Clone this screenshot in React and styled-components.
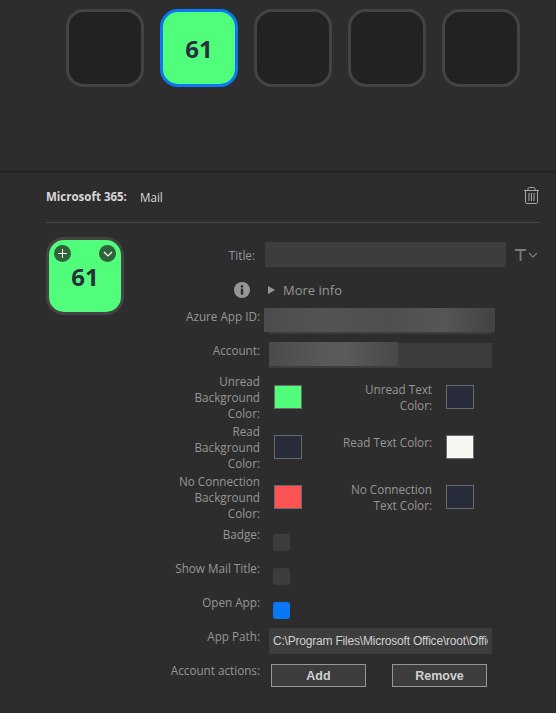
import React from "react";
import styled, { createGlobalStyle } from "styled-components";

const Global = createGlobalStyle`
  html, body { margin: 0; padding: 0; background: #2d2d2d; }
  body { font-family: "Open Sans", "Noto Sans", sans-serif; font-size: 11.7px; color: #969696; }
  #root { width: 556px; height: 713px; overflow: hidden; }
`;

const Page = styled.div`
  width: 556px;
  height: 713px;
  display: flex;
  flex-direction: column;
  background: #2d2d2d;
`;
const Deck = styled.div`
  height: 173px;
  flex: none;
  box-sizing: border-box;
  padding: 9px 0 0 66px;
  display: flex;
  gap: 16px;
  align-items: flex-start;
  border-bottom: 3px solid #252525;
`;
const Key = styled.div`
  width: 78px;
  height: 78px;
  box-sizing: border-box;
  border-radius: 18px;
  border: 3px solid ${p => (p.$active ? "#0a78f5" : "#444444")};
  background: ${p => (p.$active ? "#50fe7c" : "#222222")};
  display: flex;
  align-items: center;
  justify-content: center;
  font-family: "Noto Sans", sans-serif;
  font-weight: 700;
  font-size: 24px;
  color: #292e3c;
`;
const Inspector = styled.div`
  flex: 1;
  padding: 0 16px 0 46px;
  display: flex;
  flex-direction: column;
`;
const Header = styled.div`
  height: 50px;
  box-sizing: border-box;
  padding-bottom: 2px;
  display: flex;
  align-items: center;
  border-bottom: 1px solid #474747;
  color: #d8d8d8;
  font-size: 11.7px;
`;
const Plugin = styled.span`
  font-weight: 700;
  font-size: 11.5px;
  margin-right: 13px;
`;
const Action = styled.span`
  flex: 1;
`;
const Trash = styled.svg`
  width: 15px;
  height: 17px;
  margin: 0 1px 2px 0;
  color: #a8a8a8;
`;
const Body = styled.div`
  display: flex;
  padding-top: 14px;
`;
const PreviewKey = styled.div`
  position: relative;
  width: 78px;
  height: 78px;
  box-sizing: border-box;
  border-radius: 18px;
  border: 3px solid #444444;
  background: #50fe7c;
  display: flex;
  align-items: center;
  justify-content: center;
  font-family: "Noto Sans", sans-serif;
  font-weight: 700;
  font-size: 24px;
  color: #292e3c;
`;
const Badge = styled.span`
  position: absolute;
  top: 5px;
  ${p => (p.$right ? "right: 5px;" : "left: 5px;")}
  width: 17px;
  height: 17px;
  border-radius: 50%;
  background: #2f6339;
  display: flex;
  align-items: center;
  justify-content: center;
  color: #fff;
`;
const Form = styled.div`
  margin-left: 46px;
  width: 370px;
  display: flex;
  flex-direction: column;
`;
const TitleRow = styled.div`
  display: flex;
  align-items: center;
  height: 25px;
  margin-top: 5px;
`;
const TitleLabel = styled.label`
  width: 85px;
  text-align: right;
  flex: none;
`;
const TitleInput = styled.div`
  margin-left: 10px;
  width: 241px;
  height: 25px;
  background: #3d3d3d;
  flex: none;
`;
const TitleTool = styled.div`
  margin-left: 9px;
  display: flex;
  align-items: center;
  gap: 2px;
  color: #7d7d7d;
`;
const InfoRow = styled.div`
  display: flex;
  align-items: center;
  height: 24px;
  margin-top: 11px;
  color: #969696;
`;
const InfoIcon = styled.svg`
  margin-left: 64px;
  width: 16px;
  height: 16px;
  flex: none;
`;
const Disclosure = styled.span`
  margin-left: 18px;
  width: 0;
  height: 0;
  border-left: 7px solid #969696;
  border-top: 4px solid transparent;
  border-bottom: 4px solid transparent;
`;
const More = styled.span`
  margin-left: 8px;
  font-size: 13px;
`;
const Row = styled.div`
  display: grid;
  grid-template-columns: 90px 1fr;
  column-gap: ${p => p.$gap ?? 9}px;
  align-items: start;
  margin-top: ${p => p.$top ?? 0}px;
  height: ${p => (p.$h ? `${p.$h}px` : "auto")};
`;
const Label = styled.label`
  margin: -1px 0 0 -10px;
  text-align: right;
  line-height: 16px;
  white-space: nowrap;
`;
const Field = styled.div`
  position: relative;
  width: 223px;
  height: 25px;
  background: #3d3d3d;
`;
const BlurA = styled.div`
  position: absolute;
  top: -1px;
  left: -5px;
  width: 231px;
  height: 24px;
  background: linear-gradient(90deg, #4c4c4c, #535353 25%, #4f4f4f 55%, #565656 78%, #424242 100%);
`;
const BlurB = styled.div`
  position: absolute;
  top: -1px;
  left: 0;
  width: 129px;
  height: 24px;
  background: linear-gradient(90deg, #4b4b4b, #5a5a5a 45%, #5a5a5a 60%, #484848 100%);
`;
const ColorRow = styled.div`
  display: grid;
  grid-template-columns: 90px 28px 116px 28px;
  column-gap: 14px;
  height: 50px;
  align-items: start;
`;
const ColorCell = styled.label`
  margin-top: -1px;
  text-align: right;
  line-height: 16px;
`;
const WideCell = styled(ColorCell)`
  margin-left: 24px;
  margin-top: ${p => p.$top ?? 7}px;
`;
const Swatch = styled.span`
  display: block;
  width: 28px;
  height: 24px;
  margin-top: 11px;
  box-sizing: border-box;
  border: 1px solid #6b6b6b;
  background: ${p => p.$c};
`;
const Check = styled.span`
  display: block;
  width: 17px;
  height: 17px;
  margin-top: 7px;
  border-radius: 3px;
  background: ${p => (p.$on ? "#0a78f5" : "#3d3d3d")};
`;
const PathField = styled.div`
  width: 223px;
  height: 26px;
  margin-top: -1px;
  box-sizing: border-box;
  padding: 0 4px;
  background: #3d3d3d;
  color: #d0d0d0;
  font-family: "Liberation Sans", Arial, sans-serif;
  font-size: 12px;
  letter-spacing: -0.2px;
  line-height: 26px;
  white-space: nowrap;
  overflow: clip;
  overflow-clip-margin: content-box;
`;
const Buttons = styled.div`
  display: flex;
  gap: 26px;
  margin-top: 1px;
  padding-left: 2px;
`;
const Btn = styled.button`
  width: 95px;
  height: 23px;
  box-sizing: border-box;
  padding: 0;
  border: 1px solid #969696;
  background: #3d3d3d;
  color: #d0d0d0;
  font-family: "Liberation Sans", Arial, sans-serif;
  font-size: 12.5px;
  font-weight: 700;
`;

const Chevron = ({ size = 10, w = 1.2 }) => (
  <svg width={size} height={size} viewBox="0 0 10 10" fill="none" stroke="currentColor" strokeWidth={w}>
    <path d="M1 3l4 4 4-4" />
  </svg>
);

export default function App() {
  return (
    <Page>
      <Global />
      <Deck>
        <Key />
        <Key $active>61</Key>
        <Key />
        <Key />
        <Key />
      </Deck>
      <Inspector>
        <Header>
          <Plugin>Microsoft 365:</Plugin>
          <Action>Mail</Action>
          <Trash viewBox="0 0 15 17" fill="none" stroke="currentColor" strokeWidth="1">
            <path d="M0 3.5h15M4 3.5V2c0-1 .6-1.5 1.5-1.5h4c.9 0 1.5.5 1.5 1.5v1.5M1.5 3.5v12c0 .6.4 1 1 1h10c.6 0 1-.4 1-1v-12M5 6v8M7.5 6v8M10 6v8" />
          </Trash>
        </Header>
        <Body>
          <PreviewKey>
            <Badge>
              <svg width="11" height="11" viewBox="0 0 11 11" stroke="currentColor" strokeWidth="1">
                <path d="M5.5 1v9M1 5.5h9" />
              </svg>
            </Badge>
            <Badge $right>
              <Chevron />
            </Badge>
            61
          </PreviewKey>
          <Form>
            <TitleRow>
              <TitleLabel>Title:</TitleLabel>
              <TitleInput />
              <TitleTool>
                <svg width="11" height="12" viewBox="0 0 11 12" fill="none" stroke="currentColor" strokeWidth="1.8">
                  <path d="M0 1h11M5.5 1v11" />
                </svg>
                <Chevron />
              </TitleTool>
            </TitleRow>
            <InfoRow>
              <InfoIcon viewBox="0 0 16 16">
                <circle cx="8" cy="8" r="8" fill="#969696" />
                <rect x="6.8" y="6.6" width="2.4" height="6.2" fill="#2d2d2d" />
                <rect x="6.8" y="3.2" width="2.4" height="2.3" fill="#2d2d2d" />
              </InfoIcon>
              <Disclosure />
              <More>More info</More>
            </InfoRow>
            <Row $top={7} $h={34}>
              <Label>Azure App ID:</Label>
              <Field>
                <BlurA />
              </Field>
            </Row>
            <Row $h={31}>
              <Label>Account:</Label>
              <Field>
                <BlurB />
              </Field>
            </Row>
            <ColorRow>
              <ColorCell>Unread Background Color:</ColorCell>
              <Swatch $c="#50fe7c" />
              <WideCell>Unread Text Color:</WideCell>
              <Swatch $c="#292c3a" />
            </ColorRow>
            <ColorRow>
              <ColorCell>Read Background Color:</ColorCell>
              <Swatch $c="#292c3a" />
              <WideCell $top={10}>Read Text Color:</WideCell>
              <Swatch $c="#f6f7f2" />
            </ColorRow>
            <ColorRow>
              <ColorCell>No Connection Background Color:</ColorCell>
              <Swatch $c="#fe5353" />
              <WideCell>No Connection Text Color:</WideCell>
              <Swatch $c="#292c3a" />
            </ColorRow>
            <Row $top={3} $h={34} $gap={13}>
              <Label>Badge:</Label>
              <Check />
            </Row>
            <Row $h={34} $gap={13}>
              <Label>Show Mail Title:</Label>
              <Check />
            </Row>
            <Row $h={34} $gap={13}>
              <Label>Open App:</Label>
              <Check $on />
            </Row>
            <Row $h={34}>
              <Label>App Path:</Label>
              <PathField>C:\Program Files\Microsoft Office\root\Office16\OUTLOOK.EXE</PathField>
            </Row>
            <Row $gap={9}>
              <Label>Account actions:</Label>
              <Buttons>
                <Btn>Add</Btn>
                <Btn>Remove</Btn>
              </Buttons>
            </Row>
          </Form>
        </Body>
      </Inspector>
    </Page>
  );
}
